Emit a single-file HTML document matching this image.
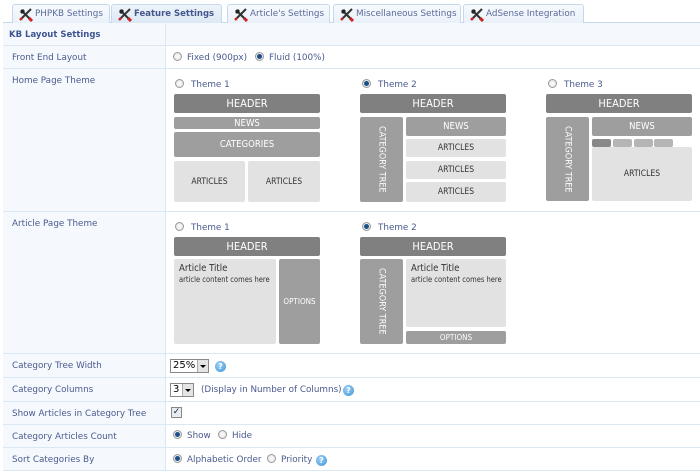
<!DOCTYPE html>
<html><head><meta charset="utf-8"><style>
*{margin:0;padding:0;box-sizing:border-box}
body{width:700px;height:472px;background:#fff;font-family:Verdana,"DejaVu Sans",sans-serif;font-size:8.8px;color:#4a5a8e;position:relative;overflow:hidden}
.a{position:absolute;white-space:nowrap}
.tab{position:absolute;top:4px;height:19px;border:1px solid #c5d8ec;border-bottom:none;background:linear-gradient(#f7fafd,#e9f1f9);border-radius:3px 3px 0 0;padding:4px 0 0 22px;color:#5a6a9a;white-space:nowrap}
.tab.on{font-weight:bold;background:linear-gradient(#eef4fa,#dce8f4);color:#44578e;font-size:8.5px}
.tab svg{position:absolute;left:6px;top:3px}
.row{position:absolute;left:3px;width:697px;border-bottom:1px solid #dbe7f3}
.lab{position:absolute;left:3px;width:163px;background:#f5f9fd;border-right:1px solid #dbe7f3;border-bottom:1px solid #dbe7f3;padding:7px 0 0 9px;white-space:nowrap}
.rad{position:absolute;width:9px;height:9px;border-radius:50%;border:1px solid #9a9a9a;background:radial-gradient(#fff,#ddd)}
.rad.on::after{content:"";position:absolute;left:1px;top:1px;width:5px;height:5px;border-radius:50%;background:#1a4f8a}
.b{position:absolute;color:#fff;font-family:"DejaVu Sans Condensed","Liberation Sans Narrow","DejaVu Sans",sans-serif;text-align:center;border-radius:2px;display:flex;align-items:center;justify-content:center}
.h{background:#808080;font-size:11px}
.m{background:#9e9e9e;font-size:9.5px}
.l{background:#e2e2e2;color:#333;font-size:8.5px}
.v{writing-mode:vertical-rl;font-size:9px;letter-spacing:0}
.t{position:absolute;color:#333;font-family:"DejaVu Sans Condensed","Liberation Sans Narrow",sans-serif;white-space:nowrap}
.help{position:absolute;width:11px;height:11px;border-radius:50%;background:radial-gradient(circle at 40% 35%,#9fd4f7,#3a92d6);color:#fff;font-size:8px;font-weight:bold;text-align:center;line-height:11px}
.sel{position:absolute;height:14px;border:1px solid #888;background:#fff;color:#000;font-size:10px;padding:0 0 0 2px;line-height:12px}
.sel i{position:absolute;right:0;top:0;width:11px;height:12px;background:#e4e4e4;border-left:1px solid #aaa}
.sel i::after{content:"";position:absolute;left:2px;top:5px;border:3px solid transparent;border-top:3px solid #000}
</style></head><body>
<div class="a" style="left:3px;top:22px;width:697px;height:1px;background:#c5d8ec"></div>
<svg width="0" height="0" style="position:absolute"><defs><g id="ic"><path d="M2 2 L11 11" stroke="#333" stroke-width="2.2"/><path d="M10 10 L13 13" stroke="#c22" stroke-width="3"/><path d="M12 1 L3 10" stroke="#333" stroke-width="2"/><path d="M1 4 L4 1 L6 3 L3 6Z" fill="#222"/><path d="M3 10 L1 12" stroke="#c22" stroke-width="2.5"/></g></defs></svg>
<div class="tab" style="left:12px;width:98px"><svg width="14" height="14"><use href="#ic"/></svg>PHPKB Settings</div>
<div class="tab on" style="left:111px;width:111px"><svg width="14" height="14"><use href="#ic"/></svg>Feature Settings</div>
<div class="tab" style="left:227px;width:103px"><svg width="14" height="14"><use href="#ic"/></svg>Article's Settings</div>
<div class="tab" style="left:333px;width:128px"><svg width="14" height="14"><use href="#ic"/></svg>Miscellaneous Settings</div>
<div class="tab" style="left:463px;width:121px"><svg width="14" height="14"><use href="#ic"/></svg>AdSense Integration</div>

<div class="a" style="left:3px;top:23px;width:697px;height:23px;background:#f5f9fd;border-bottom:1px solid #dbe7f3"></div>
<div class="a" style="left:165px;top:23px;width:1px;height:23px;background:#dbe7f3"></div>
<div class="a" style="left:9px;top:30px;font-weight:bold;color:#3f5590;font-size:8.5px">KB Layout Settings</div>

<div class="row" style="top:46px;height:23px"></div><div class="lab" style="top:46px;height:23px">Front End Layout</div>
<div class="row" style="top:69px;height:143px"></div><div class="lab" style="top:69px;height:143px">Home Page Theme</div>
<div class="row" style="top:212px;height:142px"></div><div class="lab" style="top:212px;height:142px">Article Page Theme</div>
<div class="row" style="top:354px;height:24px"></div><div class="lab" style="top:354px;height:24px">Category Tree Width</div>
<div class="row" style="top:378px;height:24px"></div><div class="lab" style="top:378px;height:24px">Category Columns</div>
<div class="row" style="top:402px;height:23px"></div><div class="lab" style="top:402px;height:23px">Show Articles in Category Tree</div>
<div class="row" style="top:425px;height:23px"></div><div class="lab" style="top:425px;height:23px">Category Articles Count</div>
<div class="row" style="top:448px;height:23px"></div><div class="lab" style="top:448px;height:23px">Sort Categories By</div>

<div class="rad" style="left:173px;top:52px"></div><div class="a" style="left:187px;top:53px">Fixed (900px)</div>
<div class="rad on" style="left:255px;top:52px"></div><div class="a" style="left:269px;top:53px">Fluid (100%)</div>

<div class="rad" style="left:175px;top:79px"></div><div class="a" style="left:191px;top:80px">Theme 1</div>
<div class="b h" style="left:174px;top:94px;width:146px;height:19px">HEADER</div>
<div class="b m" style="left:174px;top:117px;width:146px;height:12px">NEWS</div>
<div class="b m" style="left:174px;top:132px;width:146px;height:25px">CATEGORIES</div>
<div class="b l" style="left:174px;top:161px;width:71px;height:41px">ARTICLES</div>
<div class="b l" style="left:248px;top:161px;width:72px;height:41px">ARTICLES</div>

<div class="rad on" style="left:362px;top:79px"></div><div class="a" style="left:378px;top:80px">Theme 2</div>
<div class="b h" style="left:360px;top:94px;width:146px;height:19px">HEADER</div>
<div class="b m v" style="left:360px;top:117px;width:43px;height:85px">CATEGORY TREE</div>
<div class="b m" style="left:406px;top:117px;width:100px;height:19px">NEWS</div>
<div class="b l" style="left:406px;top:139px;width:100px;height:18px">ARTICLES</div>
<div class="b l" style="left:406px;top:161px;width:100px;height:18px">ARTICLES</div>
<div class="b l" style="left:406px;top:182px;width:100px;height:20px">ARTICLES</div>

<div class="rad" style="left:548px;top:79px"></div><div class="a" style="left:564px;top:80px">Theme 3</div>
<div class="b h" style="left:546px;top:94px;width:146px;height:19px">HEADER</div>
<div class="b m v" style="left:546px;top:117px;width:43px;height:84px">CATEGORY TREE</div>
<div class="b m" style="left:592px;top:117px;width:100px;height:19px">NEWS</div>
<div class="b" style="left:592px;top:139px;width:19px;height:8px;background:#888"></div>
<div class="b" style="left:613px;top:139px;width:19px;height:8px;background:#b5b5b5"></div>
<div class="b" style="left:634px;top:139px;width:19px;height:8px;background:#b5b5b5"></div>
<div class="b" style="left:654px;top:139px;width:19px;height:8px;background:#b5b5b5"></div>
<div class="b l" style="left:592px;top:147px;width:100px;height:54px">ARTICLES</div>

<div class="rad" style="left:175px;top:222px"></div><div class="a" style="left:191px;top:223px">Theme 1</div>
<div class="b h" style="left:174px;top:237px;width:146px;height:19px">HEADER</div>
<div class="b l" style="left:174px;top:259px;width:102px;height:85px"></div>
<div class="t" style="left:179px;top:263px;font-size:9.5px">Article Title</div>
<div class="t" style="left:179px;top:275px;font-size:7.5px">article content comes here</div>
<div class="b m" style="left:279px;top:259px;width:41px;height:85px;font-size:8px">OPTIONS</div>

<div class="rad on" style="left:362px;top:222px"></div><div class="a" style="left:378px;top:223px">Theme 2</div>
<div class="b h" style="left:360px;top:237px;width:146px;height:19px">HEADER</div>
<div class="b m v" style="left:360px;top:259px;width:43px;height:85px">CATEGORY TREE</div>
<div class="b l" style="left:406px;top:259px;width:100px;height:68px"></div>
<div class="t" style="left:411px;top:263px;font-size:9.5px">Article Title</div>
<div class="t" style="left:411px;top:275px;font-size:7.5px">article content comes here</div>
<div class="b m" style="left:406px;top:331px;width:100px;height:13px;font-size:8px">OPTIONS</div>

<div class="sel" style="left:170px;top:359px;width:39px">25%<i></i></div>
<div class="help" style="left:215px;top:361px">?</div>
<div class="sel" style="left:170px;top:383px;width:24px">3<i></i></div>
<div class="a" style="left:201px;top:385px">(Display in Number of Columns)</div>
<div class="help" style="left:343px;top:385px">?</div>
<div class="a" style="left:171px;top:407px;width:11px;height:11px;border:1px solid #888;background:#e8edf3;color:#223;font-size:9px;line-height:9px;text-align:center">✓</div>
<div class="rad on" style="left:173px;top:430px"></div><div class="a" style="left:187px;top:431px">Show</div>
<div class="rad" style="left:218px;top:430px"></div><div class="a" style="left:232px;top:431px">Hide</div>
<div class="rad on" style="left:173px;top:454px"></div><div class="a" style="left:187px;top:455px">Alphabetic Order</div>
<div class="rad" style="left:267px;top:454px"></div><div class="a" style="left:281px;top:455px">Priority</div>
<div class="help" style="left:316px;top:455px">?</div>
</body></html>
